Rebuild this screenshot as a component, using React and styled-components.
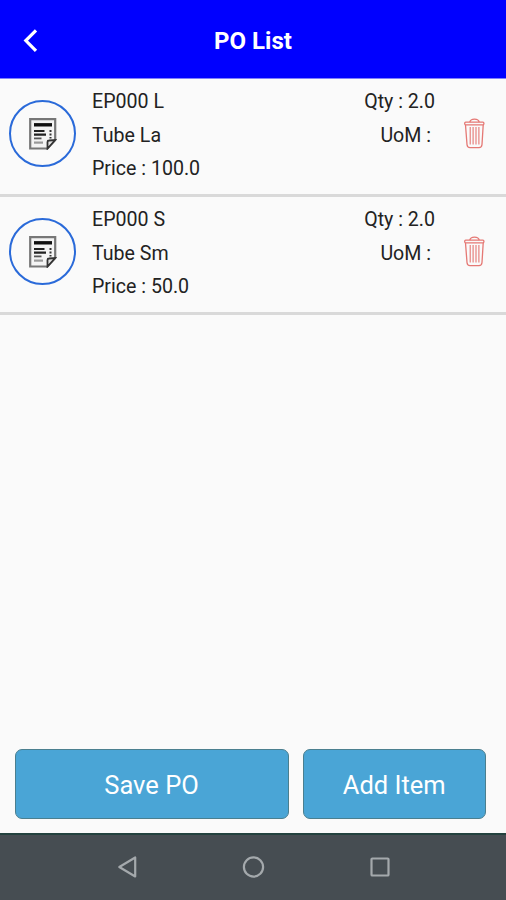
import React from 'react';
import styled, { createGlobalStyle } from 'styled-components';

const GlobalStyle = createGlobalStyle`
  * {
    box-sizing: border-box;
  }
  body {
    margin: 0;
    background: #fafafa;
    font-family: Roboto, sans-serif;
  }
  button {
    font-family: inherit;
    padding: 0;
    border: none;
    background: none;
  }
`;

// PAGE STYLES
const Screen = styled.div`
  display: flex;
  flex-direction: column;
  height: 900px;
  width: 100%;
  overflow: hidden;
  background: #fafafa;
`;

const Header = styled.header`
  display: grid;
  grid-template-columns: 60px 1fr 60px;
  align-items: center;
  height: 79px;
  padding-top: 3px;
  background: #0000ff;
  border-bottom: 1px solid #8080fc;
`;

const BackButton = styled.button`
  height: 40px;
  padding-left: 22px;
  text-align: left;
  svg {
    display: block;
  }
`;

const Title = styled.h1`
  margin: 0;
  padding-top: 1px;
  font-size: 24px;
  line-height: 28px;
  font-weight: 700;
  text-align: center;
  color: #fff;
`;

// list
const List = styled.ul`
  flex: 1;
  margin: 0;
  padding: 0;
  list-style: none;
`;

const Item = styled.li`
  display: flex;
  align-items: flex-start;
  height: 118px;
  padding: 6px 20px 0 9px;
  border-bottom: 3px solid #d9d9d9;
`;

const Badge = styled.div`
  display: flex;
  align-items: center;
  justify-content: center;
  width: 67px;
  height: 67px;
  margin: 15px 16px 0 0;
  border: 2px solid #2a6ad9;
  border-radius: 50%;
`;

const Details = styled.div`
  flex: 1;
`;

const Amounts = styled.div`
  width: 90px;
  margin-right: 28px;
  text-align: right;
`;

const Line = styled.p`
  margin: 0;
  padding-right: ${(props) => props.$inset || 0}px;
  font-size: 19.6px;
  line-height: 33.6px;
  white-space: pre;
  color: #222;
`;

const DeleteButton = styled.button`
  width: 23px;
  height: 32px;
  margin-top: 33px;
  svg {
    display: block;
  }
`;

// footer
const Actions = styled.div`
  display: flex;
  gap: 14px;
  padding: 0 20px 14px 14.5px;
`;

const ActionButton = styled.button`
  flex: ${(props) => props.$grow} 1 0;
  height: 70px;
  padding-top: 1px;
  border: 1px solid #4b7f8f;
  border-radius: 7px;
  background: #4aa5d6;
  font-size: 25.5px;
  color: #fff;
`;

const NavBar = styled.nav`
  display: flex;
  justify-content: center;
  gap: 94px;
  height: 67px;
  padding-top: 16px;
  background: #464d52;
  border-top: 2px solid #24423f;
  svg {
    display: block;
    fill: none;
    stroke: #a4a9ac;
    stroke-width: 2.2;
  }
`;

const BackIcon = () => (
  <svg width="18" height="26" viewBox="0 0 18 26" fill="none" stroke="#fff" strokeWidth="3.2">
    <path d="M14 2.3 3.8 12.5 14 22.9" />
  </svg>
);

const DocumentIcon = () => (
  <svg width="28" height="32" viewBox="0 0 28 32">
    <path d="M1.2 1.2H26.2V22L18.5 30.5H1.2Z" fill="#f4f4f4" stroke="#777" strokeWidth="2.2" />
    <path d="M26.2 22 18.5 30.5V24Q18.5 22.5 20 22.5Z" fill="#e4e4e4" stroke="#333" strokeWidth="1.8" />
    <path d="M5 6.8H23" stroke="#111" strokeWidth="3.4" />
    <path d="M5 13H15.5M5 16.7H17" stroke="#222" strokeWidth="2.2" />
    <path d="M5 20.4H12.5" stroke="#555" strokeWidth="1.8" />
    <path d="M5 24.6H14" stroke="#999" strokeWidth="2.2" />
    <path d="M21.5 12v2M21.5 15.6v2M21.5 19v1.6" stroke="#333" strokeWidth="2" />
  </svg>
);

const TrashIcon = () => (
  <svg
    width="23"
    height="32"
    viewBox="0 0 23 32"
    fill="none"
    stroke="#e57874"
    strokeWidth="1.3"
  >
    <path d="M6.8 4.2Q7.4 1.2 11.5 1.2T16.2 4.2" />
    <rect x="1.7" y="4.2" width="19.2" height="2.6" rx="1" />
    <path d="M2.5 7 4 26.5Q4.3 29.7 7 29.7H16Q18.7 29.7 19 26.5L20.2 7" />
    <path d="M7.2 9V26.5M10.1 9V26.5M13 9V26.5M15.9 9V26.5" strokeWidth="1.1" />
  </svg>
);

const items = [
  { code: 'EP000 L', name: 'Tube La', price: '100.0', qty: '2.0' },
  { code: 'EP000 S', name: 'Tube Sm', price: '50.0', qty: '2.0' },
];

const PoItem = ({ code, name, price, qty }) => (
  <Item>
    <Badge>
      <DocumentIcon />
    </Badge>
    <Details>
      <Line>{code}</Line>
      <Line>{name}</Line>
      <Line>Price : {price}</Line>
    </Details>
    <Amounts>
      <Line>Qty : {qty}</Line>
      <Line $inset={4}>UoM :</Line>
    </Amounts>
    <DeleteButton aria-label="Delete">
      <TrashIcon />
    </DeleteButton>
  </Item>
);

const App = () => {
  return (
    <Screen>
      <GlobalStyle />
      <Header>
        <BackButton aria-label="Back">
          <BackIcon />
        </BackButton>
        <Title>PO List</Title>
      </Header>

      <List>
        {items.map((item) => (
          <PoItem key={item.code} {...item} />
        ))}
      </List>

      <Actions>
        <ActionButton $grow={3}>Save PO</ActionButton>
        <ActionButton $grow={2}>Add Item</ActionButton>
      </Actions>

      <NavBar>
        <svg width="32" height="32" viewBox="0 0 32 32">
          <path d="M24.2 6.5V25.5L8.3 16Z" strokeLinejoin="round" />
        </svg>
        <svg width="32" height="32" viewBox="0 0 32 32">
          <circle cx="16.5" cy="16" r="9.6" />
        </svg>
        <svg width="32" height="32" viewBox="0 0 32 32">
          <rect x="8.5" y="7.5" width="17" height="17" rx="0.8" />
        </svg>
      </NavBar>
    </Screen>
  );
};

export default App;
